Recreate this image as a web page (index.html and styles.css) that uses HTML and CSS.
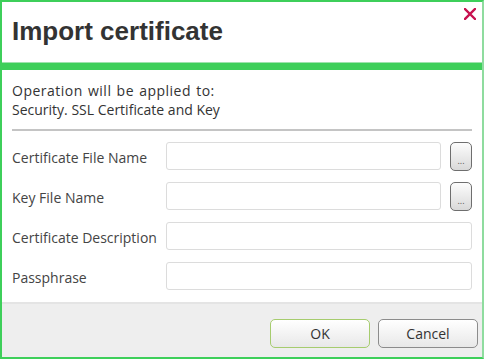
FILE: index.html
```html
<!DOCTYPE html>
<html lang="en">
<head>
    <meta charset="UTF-8">
    <meta name="viewport" content="width=device-width, initial-scale=1.0">
    <title>Import certificate</title>
    <link rel="stylesheet" href="styles.css">
</head>
<body>

<div class="dialog">
    <div class="dialog-header">
        <h1>Import certificate</h1>
        <button class="close-btn" title="Close">
            <svg width="12" height="12" viewBox="0 0 12 12">
                <path d="M1 1 L11 11 M11 1 L1 11" stroke="#c8114f" stroke-width="2.4" stroke-linecap="square"/>
            </svg>
        </button>
    </div>
    <div class="accent-bar"></div>

    <div class="dialog-body">
        <p class="scope">
            <span class="scope-title">Operation will be applied to:</span><br>
            Security. SSL Certificate and Key
        </p>
        <div class="divider"></div>

        <div class="form">
            <div class="form-row">
                <label>Certificate File Name</label>
                <input type="text">
                <button class="browse-btn">...</button>
            </div>
            <div class="form-row">
                <label>Key File Name</label>
                <input type="text">
                <button class="browse-btn">...</button>
            </div>
            <div class="form-row">
                <label>Certificate Description</label>
                <input type="text">
            </div>
            <div class="form-row">
                <label>Passphrase</label>
                <input type="password">
            </div>
        </div>
    </div>

    <div class="dialog-footer">
        <button class="btn btn-primary">OK</button>
        <button class="btn">Cancel</button>
    </div>
</div>

</body>
</html>
```

FILE: styles.css
```css
body {
    margin: 0;
    padding: 0;
    font-family: 'Open Sans', 'Noto Sans', sans-serif;
    color: #444;
    background: #fff;
}
.dialog {
    width: 484px;
    height: 359px;
    box-sizing: border-box;
    border-top: 2px solid #3ecf5a;
    border-left: 2px solid #3ecf5a;
    border-bottom: 2px solid #3ecf5a;
    border-right: 2px solid #8fdc9f;
    display: flex;
    flex-direction: column;
    background: #fff;
}
.dialog-header {
    height: 60px;
    display: flex;
    justify-content: space-between;
    align-items: flex-start;
    border-bottom: 1px solid #9fe3ad;
}
h1 {
    margin: 14px 0 0 10px;
    font-family: 'Liberation Sans', Arial, sans-serif;
    font-size: 26px;
    line-height: 30px;
    font-weight: 700;
    color: #333;
}
.close-btn {
    border: none;
    background: none;
    padding: 0;
    margin: 6px 6px 0 0;
    width: 12px;
    height: 12px;
    cursor: pointer;
}
.close-btn svg {
    display: block;
}
.accent-bar {
    height: 7px;
    background-color: #3ecf5a;
}
.dialog-body {
    flex: 1;
    padding: 12px 10px 0 10px;
}
.scope {
    margin: 0;
    font-size: 14px;
    line-height: 18.5px;
    color: #333;
}
.scope-title {
    letter-spacing: 0.5px;
    word-spacing: 1px;
}
.divider {
    height: 2px;
    background-color: #c4c4c4;
    margin: 10px 0 11px 0;
}
.form {
    display: flex;
    flex-direction: column;
    gap: 12px;
}
.form-row {
    display: flex;
    align-items: center;
    height: 28px;
}
.form-row label {
    width: 154px;
    flex-shrink: 0;
    font-size: 14px;
    color: #444;
    padding-top: 2px;
}
.form-row input {
    flex: 1;
    height: 28px;
    box-sizing: border-box;
    border: 1px solid #dcdcdc;
    border-radius: 3px;
    background: #fff;
    padding: 0 6px;
    font-size: 14px;
}
.browse-btn {
    width: 22px;
    height: 29px;
    margin-left: 9px;
    box-sizing: border-box;
    border: 1px solid #6e6e6e;
    border-radius: 5px;
    background: linear-gradient(to bottom, #fcfcfc, #d9d9d9);
    color: #555;
    font-size: 9px;
    padding: 8px 0 0 0;
    font-family: 'Open Sans', sans-serif;
    cursor: pointer;
}
.dialog-footer {
    height: 55px;
    box-sizing: border-box;
    background-color: #eeeeee;
    border-top: 2px solid #e4e4e4;
    display: flex;
    justify-content: flex-end;
    align-items: flex-start;
    gap: 8px;
    padding: 15px 4px 0 0;
}
.btn {
    width: 100px;
    height: 29px;
    box-sizing: border-box;
    border: 1px solid #8c8c8c;
    border-radius: 5px;
    background: linear-gradient(to bottom, #ffffff, #e8e8e8);
    font-family: 'Open Sans', sans-serif;
    font-size: 14px;
    color: #333;
    cursor: pointer;
}
.btn-primary {
    border-color: #a6cc6e;
}
```
